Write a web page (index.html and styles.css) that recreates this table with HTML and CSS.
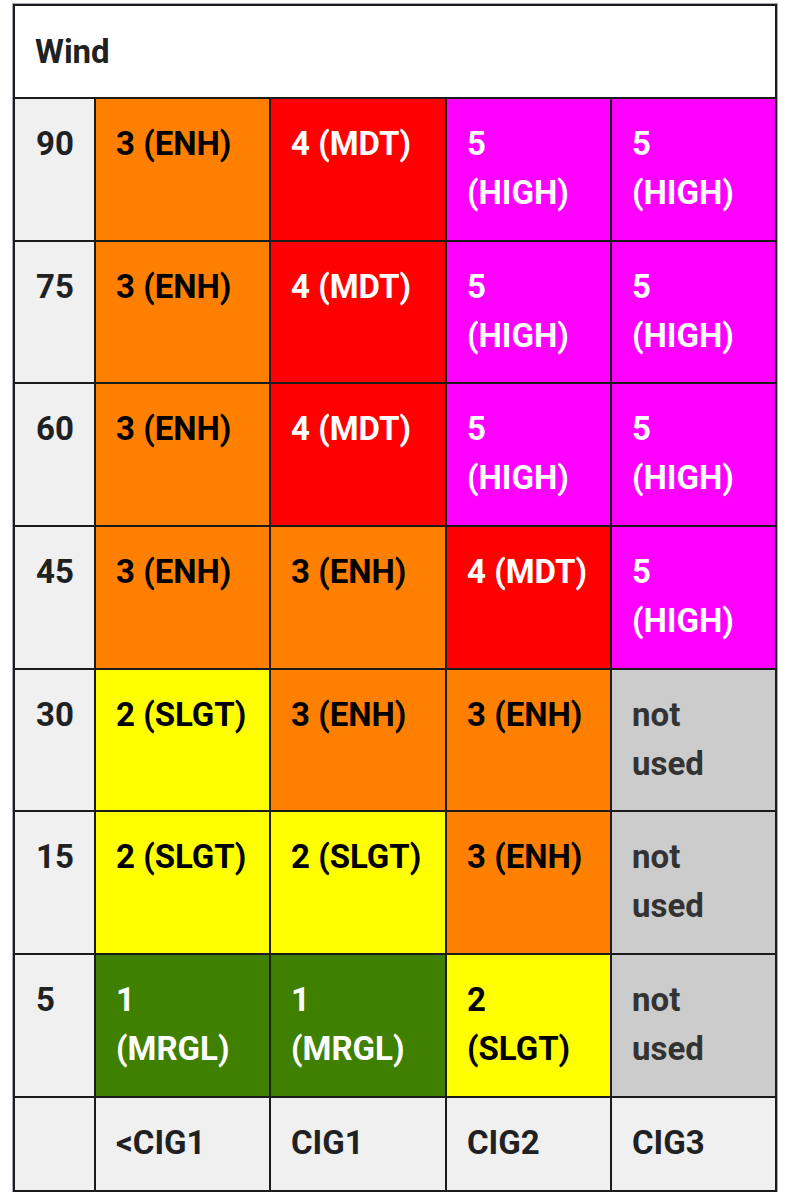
FILE: index.html
```html
<!DOCTYPE html>
<html>
<head>
<meta charset="utf-8">
<link rel="stylesheet" href="styles.css">
</head>
<body>
<table class="risk">
  <colgroup>
    <col class="c-axis"><col class="c-a"><col class="c-b"><col class="c-c"><col class="c-d">
  </colgroup>
  <tr class="head"><th colspan="5">Wind</th></tr>
  <tr class="row">
    <th class="axis">90</th>
    <td class="enh">3 (ENH)</td><td class="mdt">4 (MDT)</td><td class="high">5 (HIGH)</td><td class="high">5 (HIGH)</td>
  </tr>
  <tr class="row">
    <th class="axis">75</th>
    <td class="enh">3 (ENH)</td><td class="mdt">4 (MDT)</td><td class="high">5 (HIGH)</td><td class="high">5 (HIGH)</td>
  </tr>
  <tr class="row">
    <th class="axis">60</th>
    <td class="enh">3 (ENH)</td><td class="mdt">4 (MDT)</td><td class="high">5 (HIGH)</td><td class="high">5 (HIGH)</td>
  </tr>
  <tr class="row">
    <th class="axis">45</th>
    <td class="enh">3 (ENH)</td><td class="enh">3 (ENH)</td><td class="mdt">4 (MDT)</td><td class="high">5 (HIGH)</td>
  </tr>
  <tr class="row">
    <th class="axis">30</th>
    <td class="slgt">2 (SLGT)</td><td class="enh">3 (ENH)</td><td class="enh">3 (ENH)</td><td class="na">not used</td>
  </tr>
  <tr class="row">
    <th class="axis">15</th>
    <td class="slgt">2 (SLGT)</td><td class="slgt">2 (SLGT)</td><td class="enh">3 (ENH)</td><td class="na">not used</td>
  </tr>
  <tr class="row">
    <th class="axis">5</th>
    <td class="mrgl">1 (MRGL)</td><td class="mrgl">1 (MRGL)</td><td class="slgt">2 (SLGT)</td><td class="na">not used</td>
  </tr>
  <tr class="foot">
    <th class="axis"></th>
    <th class="axis">&lt;CIG1</th><th class="axis">CIG1</th><th class="axis">CIG2</th><th class="axis">CIG3</th>
  </tr>
</table>
</body>
</html>
```
FILE: styles.css
```css
html, body {
  margin: 0;
  padding: 0;
  background: #ffffff;
}
body {
  padding: 4px 0 0 13px;
}
.risk {
  border-collapse: collapse;
  table-layout: fixed;
  width: 763px;
  font-family: Roboto, "Liberation Sans", sans-serif;
  font-weight: 700;
  font-size: 33px;
  line-height: 49px;
  color: #202122;
  border: 2px solid #1b1b1b;
  outline: 1px solid #a2a9b1;
}
.c-axis { width: 81px; }
.c-a { width: 175px; }
.c-b { width: 176px; }
.c-c { width: 165px; }
.c-d { width: 165px; }
.risk th, .risk td {
  border: 2px solid #1b1b1b;
  padding: 20px 20px;
  text-align: left;
  vertical-align: top;
  font-weight: 700;
}
.risk .axis:first-child { padding-left: 21px; }
.head th {
  background: #ffffff;
  height: 93px;
  box-sizing: border-box;
  padding-top: 21px;
}
.row { height: 142.7px; }
.foot th {
  height: 94px;
  box-sizing: border-box;
}
.axis { background: #f0f0f0; }
.enh { background: #ff8000; color: #000; }
.mdt { background: #ff0000; color: #fff; }
.high { background: #ff00ff; color: #fff; }
.slgt { background: #ffff00; color: #000; }
.mrgl { background: #408000; color: #fff; }
.na { background: #cccccc; color: #333333; }
```
